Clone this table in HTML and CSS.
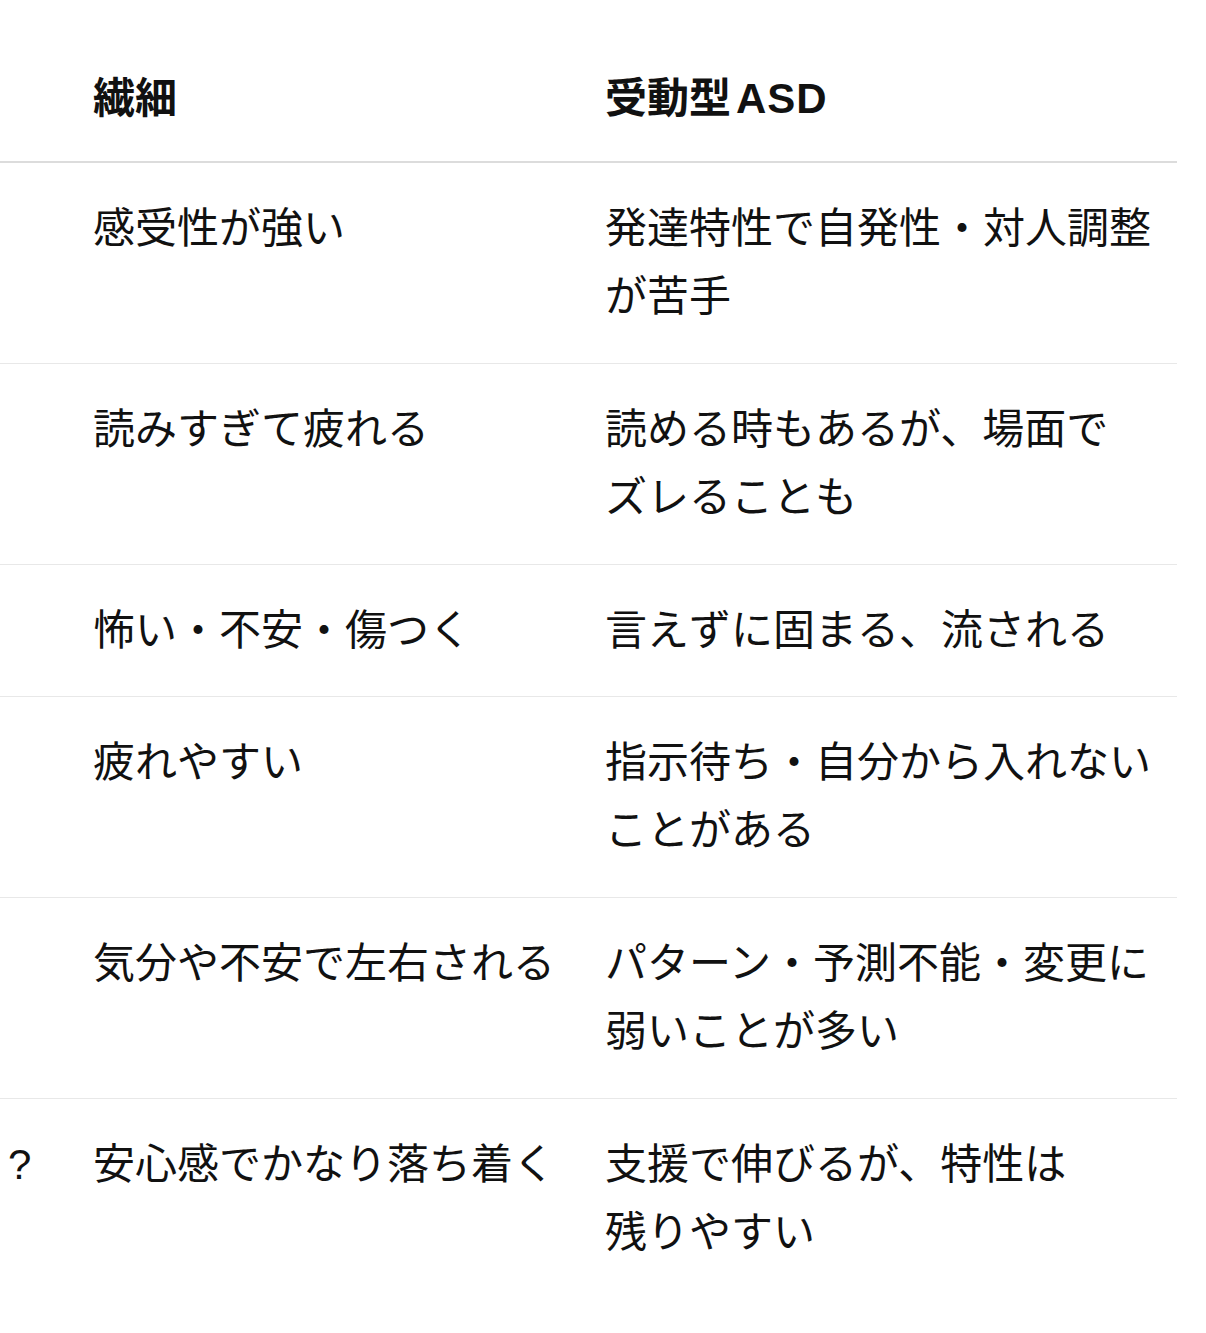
FILE: index.html
```html
<!DOCTYPE html>
<html lang="ja">
<head>
<meta charset="utf-8">
<title>繊細と受動型ASD</title>
<link rel="stylesheet" href="styles.css">
</head>
<body>
<div class="table-wrap">
  <table class="compare">
    <thead>
      <tr>
        <th class="c0"></th>
        <th class="c1">繊細</th>
        <th class="c2">受動型<span class="latin">ASD</span></th>
      </tr>
    </thead>
    <tbody>
      <tr>
        <td class="c0"></td>
        <td class="c1">感受性が強い</td>
        <td class="c2">発達特性で自発性・対人調整が苦手</td>
      </tr>
      <tr>
        <td class="c0"></td>
        <td class="c1">読みすぎて疲れる</td>
        <td class="c2">読める時もあるが、場面で<span class="phrase">ズレることも</span></td>
      </tr>
      <tr class="single">
        <td class="c0"></td>
        <td class="c1">怖い・不安・傷つく</td>
        <td class="c2">言えずに固まる、流される</td>
      </tr>
      <tr>
        <td class="c0"></td>
        <td class="c1">疲れやすい</td>
        <td class="c2">指示待ち・自分から入れないことがある</td>
      </tr>
      <tr>
        <td class="c0"></td>
        <td class="c1">気分や不安で左右される</td>
        <td class="c2">パターン・予測不能・変更に弱いことが多い</td>
      </tr>
      <tr class="last">
        <td class="c0">?</td>
        <td class="c1">安心感でかなり落ち着く</td>
        <td class="c2">支援で伸びるが、特性は<span class="phrase">残りやすい</span></td>
      </tr>
    </tbody>
  </table>
</div>
</body>
</html>
```
FILE: styles.css
```css
html, body {
  margin: 0;
  padding: 0;
  background: #ffffff;
}

body {
  font-family: "Liberation Sans", "Noto Sans CJK JP", sans-serif;
  color: #111111;
}

.table-wrap {
  width: 1177px;
  padding-top: 33px;
}

.compare {
  width: 1177px;
  border-collapse: collapse;
  table-layout: fixed;
  font-size: 42px;
  line-height: 68px;
}

.compare th,
.compare td {
  text-align: left;
  vertical-align: top;
  padding: 32px 25px;
  word-break: break-all;
}

.compare th {
  font-weight: 700;
  padding-top: 32px;
  padding-bottom: 28px;
  border-bottom: 2px solid #dcdcdc;
}

.compare td {
  font-weight: 400;
  border-bottom: 1px solid #e8e8e8;
}

.compare tr.single td {
  padding-bottom: 31px;
}

.compare tr.last td {
  border-bottom: none;
}

.compare .c0 {
  width: 35px;
  padding-left: 8px;
}

.compare .c1 {
  width: 462px;
}

.compare .c2 {
  width: auto;
}

.latin {
  margin-left: 5px;
  letter-spacing: 1px;
}

.phrase {
  white-space: nowrap;
  display: inline-block;
}
```
